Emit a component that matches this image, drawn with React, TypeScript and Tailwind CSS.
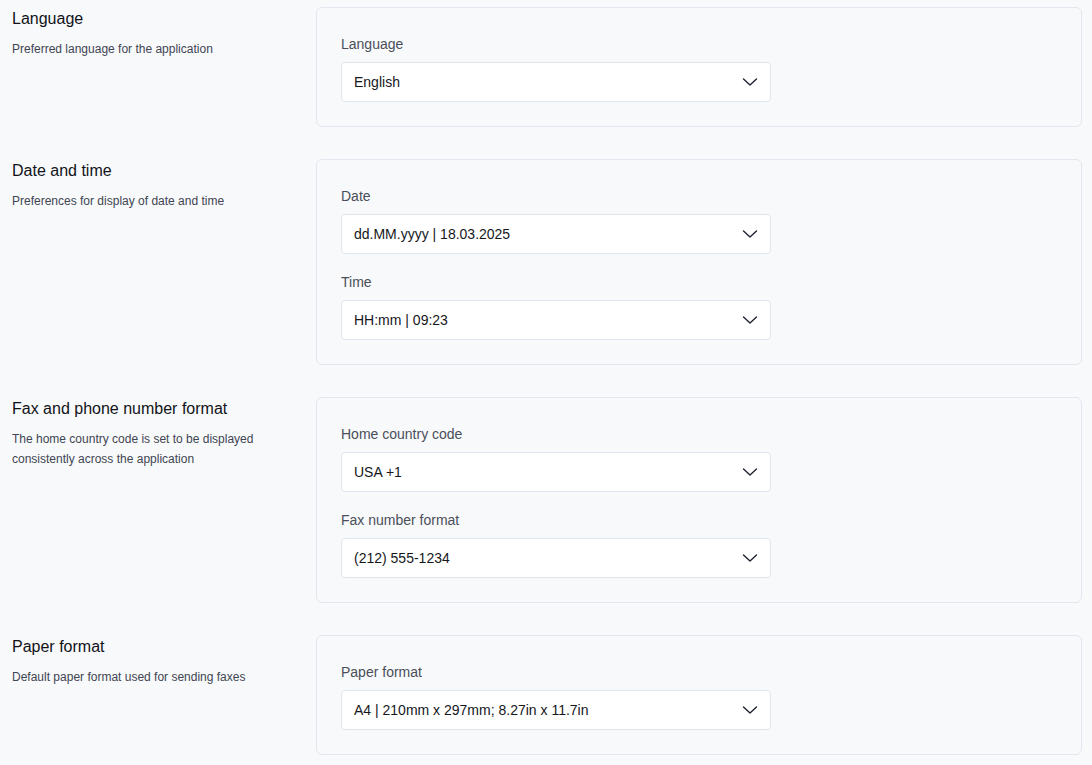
import { ReactNode } from "react";

function Chevron() {
  return (
    <svg width="16" height="10" viewBox="0 0 16 10" fill="none" className="shrink-0">
      <path d="M1.5 2 L8 8 L14.5 2" stroke="#1f2430" strokeWidth="1.4" strokeLinecap="round" strokeLinejoin="round" />
    </svg>
  );
}

function SelectField({ label, value, first }: { label: string; value: string; first?: boolean }) {
  return (
    <div className={first ? "" : "mt-4"}>
      <p className="text-sm leading-6 text-[#4a4f5a]">{label}</p>
      <div className="mt-1.5 flex h-10 w-[430px] items-center justify-between rounded-[4px] border border-[#e1e6ee] bg-white pl-[12px] pr-[12px]">
        <span className="text-sm text-[#15171c]">{value}</span>
        <Chevron />
      </div>
    </div>
  );
}

function Section({ title, desc, children }: { title: string; desc: ReactNode; children: ReactNode }) {
  return (
    <div className="grid grid-cols-[304px_1fr]">
      {/* Description column */}
      <div>
        <h2 className="text-base leading-6 text-[#111318]">{title}</h2>
        <p className="mt-2 text-xs leading-5 text-[#3f4552]">{desc}</p>
      </div>
      {/* Card */}
      <div className="rounded-[6px] border border-[#e2e7ef] bg-[#f8f9fb] px-6 pt-6 pb-6">{children}</div>
    </div>
  );
}

export default function App() {
  return (
    <div
      className="min-h-[765px] bg-[#f8f9fb] pl-3 pr-[10px] pt-[7px] pb-[10px]"
      style={{ fontFamily: '"Liberation Sans", Arial, sans-serif' }}
    >
      <div className="flex flex-col gap-8">
        <Section title="Language" desc="Preferred language for the application">
          <SelectField first label="Language" value="English" />
        </Section>

        <Section title="Date and time" desc="Preferences for display of date and time">
          <SelectField first label="Date" value="dd.MM.yyyy | 18.03.2025" />
          <SelectField label="Time" value="HH:mm | 09:23" />
        </Section>

        <Section
          title="Fax and phone number format"
          desc={
            <>
              The home country code is set to be displayed
              <br />
              consistently across the application
            </>
          }
        >
          <SelectField first label="Home country code" value="USA +1" />
          <SelectField label="Fax number format" value="(212) 555-1234" />
        </Section>

        <Section title="Paper format" desc="Default paper format used for sending faxes">
          <SelectField first label="Paper format" value="A4 | 210mm x 297mm; 8.27in x 11.7in" />
        </Section>
      </div>
    </div>
  );
}
